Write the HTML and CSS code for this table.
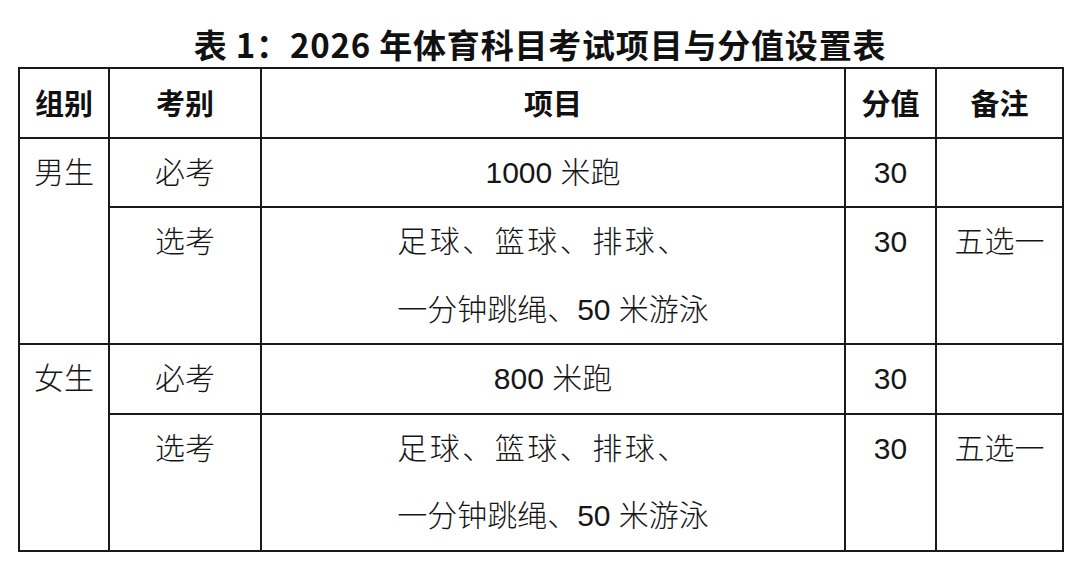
FILE: index.html
```html
<!DOCTYPE html>
<html lang="zh-CN">
<head>
<meta charset="utf-8">
<title>表 1：2026 年体育科目考试项目与分值设置表</title>
<link rel="stylesheet" href="styles.css">
</head>
<body>
<div class="page">
  <h1 class="title">表 1：2026 年体育科目考试项目与分值设置表</h1>
  <table class="score-table">
    <colgroup>
      <col class="c-group">
      <col class="c-type">
      <col class="c-item">
      <col class="c-score">
      <col class="c-note">
    </colgroup>
    <thead>
      <tr>
        <th>组别</th>
        <th>考别</th>
        <th>项目</th>
        <th>分值</th>
        <th>备注</th>
      </tr>
    </thead>
    <tbody>
      <tr>
        <td rowspan="2">男生</td>
        <td>必考</td>
        <td>1000 米跑</td>
        <td>30</td>
        <td></td>
      </tr>
      <tr>
        <td>选考</td>
        <td><div class="items"><span class="line wide">足球、篮球、排球、</span><span class="line">一分钟跳绳、50 米游泳</span></div></td>
        <td>30</td>
        <td>五选一</td>
      </tr>
      <tr>
        <td rowspan="2">女生</td>
        <td>必考</td>
        <td>800 米跑</td>
        <td>30</td>
        <td></td>
      </tr>
      <tr>
        <td>选考</td>
        <td><div class="items"><span class="line wide">足球、篮球、排球、</span><span class="line">一分钟跳绳、50 米游泳</span></div></td>
        <td>30</td>
        <td>五选一</td>
      </tr>
    </tbody>
  </table>
</div>
</body>
</html>
```

FILE: styles.css
```css
html, body {
  margin: 0;
  padding: 0;
  background: #ffffff;
}

.page {
  padding: 24px 0 0 18px;
  width: 1044px;
}

.title {
  margin: 0 0 3px 0;
  height: 40px;
  line-height: 40px;
  text-align: center;
  font-family: "Noto Sans CJK SC", sans-serif;
  font-weight: 700;
  font-size: 33px;
  letter-spacing: 0.8px;
  color: #111111;
}

.score-table {
  border-collapse: collapse;
  table-layout: fixed;
  width: 1044px;
  font-family: "Liberation Sans", "Noto Sans CJK SC", sans-serif;
  font-size: 30px;
  color: #161616;
}

.c-group { width: 90px; }
.c-type { width: 152px; }
.c-item { width: 584px; }
.c-score { width: 91px; }
.c-note { width: 127px; }

.score-table th,
.score-table td {
  border: 2px solid #1a1a1a;
  padding: 0;
  line-height: 67.5px;
  text-align: center;
  vertical-align: top;
  white-space: nowrap;
}

.score-table th {
  font-family: "Noto Sans CJK SC", sans-serif;
  font-weight: 700;
  font-size: 29px;
  color: #111111;
}

.score-table td {
  font-weight: 300;
}

.items {
  display: inline-block;
  text-align: left;
  vertical-align: top;
}

.line {
  display: block;
}

.line.wide {
  letter-spacing: 2.5px;
}
```
